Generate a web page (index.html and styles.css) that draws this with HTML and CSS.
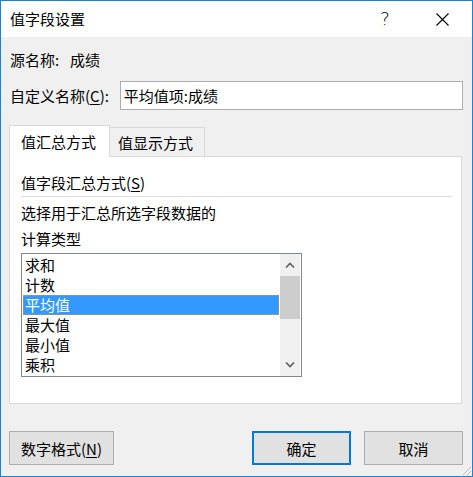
FILE: index.html
```html
<!DOCTYPE html>
<html lang="zh-CN">
<head>
  <meta charset="UTF-8">
  <title>值字段设置</title>
  <link rel="stylesheet" href="styles.css">
</head>
<body>

  <div class="window">
    <div class="titlebar">
      <span class="title">值字段设置</span>
      <span class="help">?</span>
      <span class="close">
        <svg width="13" height="13" viewBox="0 0 13 13">
          <path d="M0.5 0.5 L12.5 12.5 M12.5 0.5 L0.5 12.5" stroke="#000" stroke-width="1.1" fill="none"/>
        </svg>
      </span>
    </div>

    <div class="main">
      <div class="row source">
        <span class="source-label">源名称:</span>
        <span>成绩</span>
      </div>

      <div class="row name-row">
        <label class="name-label">自定义名称(<u>C</u>):</label>
        <div class="textbox">平均值项:成绩</div>
      </div>

      <div class="tabs">
        <div class="tab active">值汇总方式</div>
        <div class="tab">值显示方式</div>
      </div>

      <div class="panel">
        <div class="group-title">值字段汇总方式(<u>S</u>)</div>
        <div class="separator"></div>
        <div class="line">选择用于汇总所选字段数据的</div>
        <div class="line">计算类型</div>

        <div class="listbox">
          <div class="items">
            <div class="item">求和</div>
            <div class="item">计数</div>
            <div class="item selected">平均值</div>
            <div class="item">最大值</div>
            <div class="item">最小值</div>
            <div class="item">乘积</div>
          </div>
          <div class="scrollbar">
            <div class="arrow">
              <svg width="10" height="6" viewBox="0 0 10 6">
                <polyline points="1,5.5 5,1.5 9,5.5" stroke="#606060" stroke-width="1.6" fill="none"/>
              </svg>
            </div>
            <div class="track">
              <div class="thumb"></div>
            </div>
            <div class="arrow">
              <svg width="10" height="6" viewBox="0 0 10 6">
                <polyline points="1,0.5 5,4.5 9,0.5" stroke="#606060" stroke-width="1.6" fill="none"/>
              </svg>
            </div>
          </div>
        </div>
      </div>

      <div class="buttons">
        <button class="btn format">数字格式(<u>N</u>)</button>
        <button class="btn ok">确定</button>
        <button class="btn cancel">取消</button>
      </div>
    </div>

    <svg class="grip" width="12" height="12" viewBox="0 0 12 12">
      <path d="M11 3 L3 11 M11 7 L7 11" stroke="#b8b8b8" stroke-width="1" fill="none"/>
      <path d="M12 4 L4 12 M12 8 L8 12" stroke="#ffffff" stroke-width="1" fill="none"/>
    </svg>
  </div>

</body>
</html>
```

FILE: styles.css
```css
body {
  margin: 0;
  font-family: "Noto Sans CJK SC", "Noto Sans", sans-serif;
  font-size: 15px;
  line-height: 20px;
  color: #000;
}

.window {
  position: relative;
  width: 473px;
  height: 477px;
  box-sizing: border-box;
  border: 1px solid #1883d7;
  background-color: #f0f0f0;
}

.titlebar {
  display: flex;
  align-items: center;
  height: 36px;
  padding: 0 15px 0 9px;
  background: white;
}

.title {
  flex: 1;
}

.help {
  width: 30px;
  margin-right: 27px;
  text-align: center;
  font-family: "DejaVu Sans", sans-serif;
  font-weight: 200;
  font-size: 18px;
  line-height: 20px;
}

.close {
  width: 30px;
  height: 13px;
  display: flex;
  justify-content: center;
}

.main {
  padding: 0 9px 0 8px;
}

.row {
  display: flex;
  align-items: center;
  padding-left: 1px;
}

.source {
  margin-top: 13px;
}

.source-label {
  width: 60px;
}

.name-row {
  margin-top: 11px;
}

.name-label {
  width: 110px;
}

.name-label u,
.group-title u,
.btn u {
  text-underline-offset: 2px;
}

.textbox {
  width: 344px;
  height: 29px;
  box-sizing: border-box;
  padding-left: 3px;
  line-height: 27px;
  background: white;
  border: 1px solid #adadad;
}

.tabs {
  display: flex;
  align-items: flex-end;
  margin-top: 15px;
}

.tab {
  box-sizing: border-box;
  border: 1px solid #d9d9d9;
  border-bottom: none;
  background: #f0f0f0;
}

.tab.active {
  position: relative;
  z-index: 1;
  width: 101px;
  height: 32px;
  margin-bottom: -1px;
  padding: 6px 0 0 11px;
  background: white;
}

.tab:not(.active) {
  width: 95px;
  height: 29px;
  border-left: none;
  padding: 5px 0 0 8px;
}

.panel {
  width: 453px;
  height: 248px;
  box-sizing: border-box;
  padding: 16px 9px 0 11px;
  background: white;
  border: 1px solid #d9d9d9;
}

.separator {
  height: 1px;
  margin-top: 3px;
  background: #dcdcdc;
}

.line {
  margin-top: 6px;
}

.listbox {
  display: flex;
  width: 281px;
  height: 124px;
  box-sizing: border-box;
  margin-top: 4px;
  padding-right: 1px;
  border: 1px solid #828790;
  background: white;
}

.items {
  flex: 1;
  padding: 1px 1px 0 1px;
}

.item {
  height: 20px;
  padding-left: 2px;
}

.item.selected {
  background: #3399ff;
  color: white;
  outline: 1px dotted #e0902c;
  outline-offset: -1px;
}

.scrollbar {
  width: 20px;
  display: flex;
  flex-direction: column;
  background: #f0f0f0;
}

.arrow {
  height: 22px;
  display: flex;
  align-items: center;
  justify-content: center;
}

.track {
  flex: 1;
}

.thumb {
  height: 43px;
  background: #cdcdcd;
}

.buttons {
  display: flex;
  margin-top: 27px;
}

.btn {
  height: 34px;
  box-sizing: border-box;
  padding: 0;
  font-family: inherit;
  font-size: 15px;
  color: #000;
  background-color: #e1e1e1;
  border: 1px solid #adadad;
}

.format {
  width: 105px;
  margin-right: auto;
}

.ok {
  width: 99px;
  border: 2px solid #0078d7;
}

.cancel {
  width: 99px;
  margin-left: 13px;
}

.grip {
  position: absolute;
  right: 0;
  bottom: 0;
}
```
